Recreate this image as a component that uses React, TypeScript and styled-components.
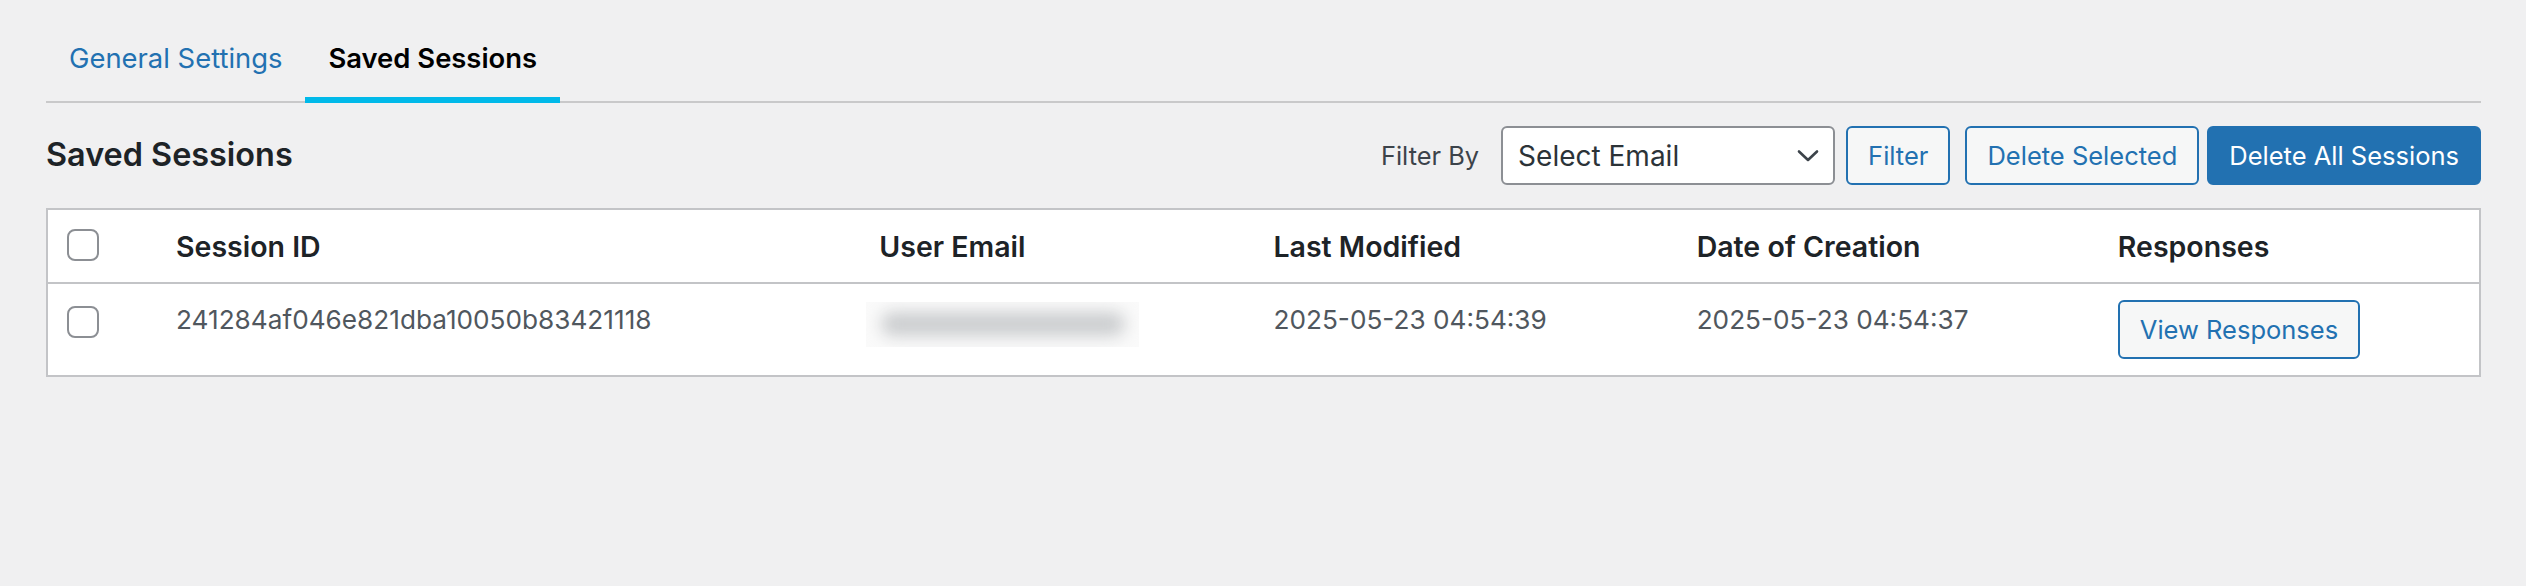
import React from "react";
import styled, { createGlobalStyle } from "styled-components";

const GlobalStyle = createGlobalStyle`
  html, body { margin: 0; padding: 0; background: #f0f0f1; }
  body {
    font-family: Inter, "Noto Sans", "Liberation Sans", sans-serif;
    color: #3c434a;
    -webkit-font-smoothing: antialiased;
  }
  * { box-sizing: border-box; }
`;

const Page = styled.div`
  min-height: 586px;
  padding: 20px 45px 0 46px;
`;

const TabNav = styled.nav`
  display: flex;
  border-bottom: 2px solid #c9c9ca;
`;

const Tab = styled.a<{ $active?: boolean }>`
  display: block;
  padding: 21px 23px 22px 23px;
  margin-bottom: -2px;
  font-size: 27.4px;
  line-height: 34px;
  font-weight: ${(p) => (p.$active ? 600 : 400)};
  color: ${(p) => (p.$active ? "#000" : "#2271b1")};
  text-decoration: none;
  border-bottom: 6px solid ${(p) => (p.$active ? "#00b9e9" : "transparent")};
  cursor: pointer;
`;

const Toolbar = styled.div`
  display: flex;
  align-items: center;
  justify-content: space-between;
  margin-top: 23px;
  height: 59px;
`;

const Heading = styled.h2`
  margin: 0;
  font-size: 32.4px;
  line-height: 1.3;
  font-weight: 600;
  color: #1d2327;
`;

const Actions = styled.div`
  display: flex;
  align-items: center;
`;

const FilterLabel = styled.label`
  font-size: 25.4px;
  color: #3c434a;
  margin-right: 22px;
`;

const SelectWrap = styled.div`
  position: relative;
  margin-right: 11px;
`;

const Select = styled.select`
  appearance: none;
  -webkit-appearance: none;
  display: block;
  width: 334px;
  height: 59px;
  margin: 0;
  padding: 0 48px 0 15px;
  font-family: inherit;
  font-size: 28px;
  color: #2c3338;
  background: #fff;
  border: 2px solid #8c8f94;
  border-radius: 6px;
  outline: none;
`;

const Chevron = styled.svg`
  position: absolute;
  right: 16px;
  top: 50%;
  width: 22px;
  height: 14px;
  transform: translateY(-50%);
  pointer-events: none;
`;

const Button = styled.button<{ $primary?: boolean; $gap?: number }>`
  height: 59px;
  margin: 0 ${(p) => p.$gap ?? 0}px 0 0;
  padding: 0 20px;
  font-family: inherit;
  font-size: 25.5px;
  line-height: 55px;
  white-space: nowrap;
  border-radius: 6px;
  border: 2px solid #2271b1;
  background: ${(p) => (p.$primary ? "#2271b1" : "#f6f7f7")};
  color: ${(p) => (p.$primary ? "#fff" : "#2271b1")};
  cursor: pointer;
`;

const Table = styled.table`
  width: 100%;
  margin-top: 23px;
  border: 2px solid #c3c4c7;
  border-collapse: separate;
  border-spacing: 0;
  table-layout: fixed;
  background: #fff;
`;

const Col = styled.col<{ $w: number }>`
  width: ${(p) => p.$w}px;
`;

const Th = styled.th<{ $check?: boolean }>`
  text-align: left;
  font-size: 28.5px;
  line-height: 39px;
  font-weight: 600;
  color: #1d2327;
  padding: 17px 20px 16px ${(p) => (p.$check ? 19 : 20)}px;
  border-bottom: 2px solid #c3c4c7;
  vertical-align: top;
`;

const Td = styled.td<{ $check?: boolean }>`
  font-size: 26.2px;
  line-height: 39px;
  color: #50575e;
  padding: 16px 20px 16px ${(p) => (p.$check ? 19 : 20)}px;
  vertical-align: top;
`;

const Checkbox = styled.input.attrs({ type: "checkbox" })<{ $offset: number }>`
  appearance: none;
  -webkit-appearance: none;
  display: block;
  width: 32px;
  height: 32px;
  margin: ${(p) => p.$offset}px 0 0;
  border: 2px solid #8c8f94;
  border-radius: 8px;
  background: #fff;
`;

const Redacted = styled.div`
  width: 273px;
  height: 45px;
  margin: 2px 0 0 -13px;
  background: #fafafa;
  padding: 10px 0 0 15px;
  overflow: hidden;
`;

const RedactedBar = styled.div`
  width: 244px;
  height: 24px;
  border-radius: 12px;
  background: #cbcdcf;
  filter: blur(8px);
`;

export default function App() {
  return (
    <>
      <GlobalStyle />
      <Page>
        <TabNav>
          <Tab>General Settings</Tab>
          <Tab $active>Saved Sessions</Tab>
        </TabNav>

        <Toolbar>
          <Heading>Saved Sessions</Heading>
          <Actions>
            <FilterLabel>Filter By</FilterLabel>
            <SelectWrap>
              <Select defaultValue="">
                <option value="">Select Email</option>
              </Select>
              <Chevron viewBox="0 0 22 14" fill="none">
                <path d="M2 2.5 L11 11 L20 2.5" stroke="#3c434a" strokeWidth="2.6" strokeLinecap="round" strokeLinejoin="round" />
              </Chevron>
            </SelectWrap>
            <Button $gap={15}>Filter</Button>
            <Button $gap={8}>Delete Selected</Button>
            <Button $primary>Delete All Sessions</Button>
          </Actions>
        </Toolbar>

        <Table>
          <colgroup>
            <Col $w={108} />
            <Col $w={703} />
            <Col $w={394} />
            <Col $w={423} />
            <Col $w={421} />
            <Col $w={381} />
          </colgroup>
          <thead>
            <tr>
              <Th $check>
                <Checkbox $offset={2} />
              </Th>
              <Th>Session ID</Th>
              <Th>User Email</Th>
              <Th>Last Modified</Th>
              <Th>Date of Creation</Th>
              <Th>Responses</Th>
            </tr>
          </thead>
          <tbody>
            <tr>
              <Td $check>
                <Checkbox $offset={6} />
              </Td>
              <Td>241284af046e821dba10050b83421118</Td>
              <Td>
                <Redacted>
                  <RedactedBar />
                </Redacted>
              </Td>
              <Td>2025-05-23 04:54:39</Td>
              <Td>2025-05-23 04:54:37</Td>
              <Td>
                <Button>View Responses</Button>
              </Td>
            </tr>
          </tbody>
        </Table>
      </Page>
    </>
  );
}
